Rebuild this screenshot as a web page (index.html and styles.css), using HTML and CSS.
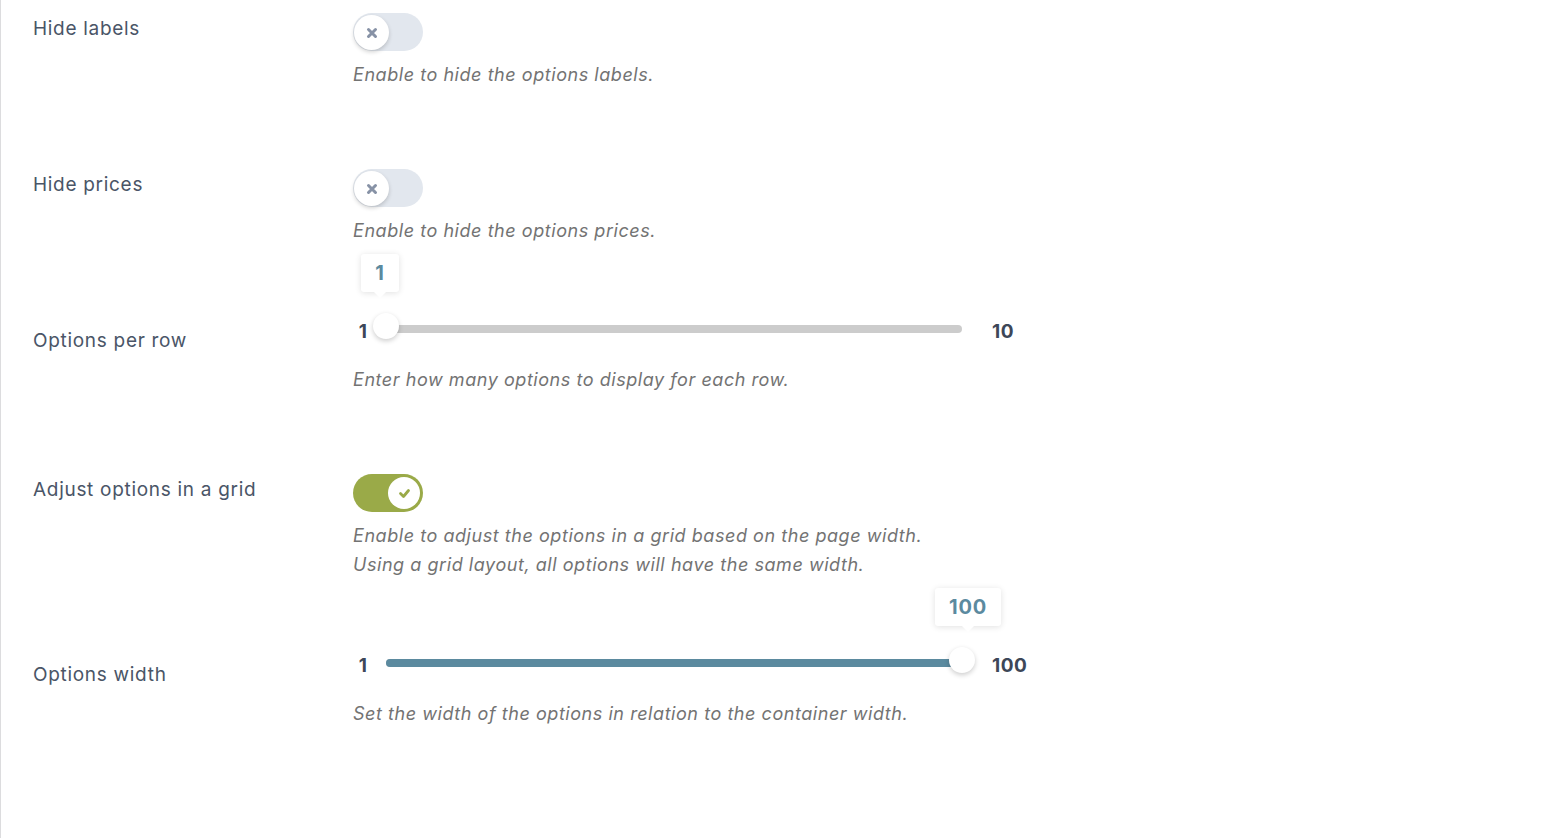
FILE: index.html
```html
<!DOCTYPE html>
<html lang="en">
<head>
    <meta charset="UTF-8">
    <meta name="viewport" content="width=device-width, initial-scale=1.0">
    <title>Option display settings</title>
    <link rel="stylesheet" href="styles.css">
</head>
<body>
    <div class="settings">

        <!-- Hide labels -->
        <div class="row">
            <div class="label">Hide labels</div>
            <div class="field">
                <span class="toggle">
                    <span class="knob">
                        <svg width="12" height="12" viewBox="0 0 12 12"><path d="M2.5 2.5l7 7M9.5 2.5l-7 7" stroke="#8792a6" stroke-width="3" stroke-linecap="round"/></svg>
                    </span>
                </span>
                <p class="desc">Enable to hide the options labels.</p>
            </div>
        </div>

        <!-- Hide prices -->
        <div class="row">
            <div class="label">Hide prices</div>
            <div class="field">
                <span class="toggle">
                    <span class="knob">
                        <svg width="12" height="12" viewBox="0 0 12 12"><path d="M2.5 2.5l7 7M9.5 2.5l-7 7" stroke="#8792a6" stroke-width="3" stroke-linecap="round"/></svg>
                    </span>
                </span>
                <p class="desc">Enable to hide the options prices.</p>
            </div>
        </div>

        <!-- Options per row -->
        <div class="row">
            <div class="label">Options per row</div>
            <div class="field">
                <div class="slider">
                    <span class="min">1</span>
                    <div class="track">
                        <span class="fill" style="width: 0%"></span>
                        <span class="thumb" style="left: 0%">
                            <span class="tip tip-start">1</span>
                        </span>
                    </div>
                    <span class="max">10</span>
                </div>
                <p class="desc">Enter how many options to display for each row.</p>
            </div>
        </div>

        <!-- Adjust options in a grid -->
        <div class="row">
            <div class="label">Adjust options in a grid</div>
            <div class="field">
                <span class="toggle on">
                    <span class="knob">
                        <svg width="13" height="11" viewBox="0 0 13 11"><path d="M2.5 5.5l3 3 5-6" fill="none" stroke="#9aaa48" stroke-width="2.8" stroke-linecap="round" stroke-linejoin="round"/></svg>
                    </span>
                </span>
                <p class="desc">Enable to adjust the options in a grid based on the page width.<br>Using a grid layout, all options will have the same width.</p>
            </div>
        </div>

        <!-- Options width -->
        <div class="row">
            <div class="label">Options width</div>
            <div class="field">
                <div class="slider">
                    <span class="min">1</span>
                    <div class="track">
                        <span class="fill" style="width: 100%"></span>
                        <span class="thumb" style="left: 100%">
                            <span class="tip tip-end">100</span>
                        </span>
                    </div>
                    <span class="max">100</span>
                </div>
                <p class="desc">Set the width of the options in relation to the container width.</p>
            </div>
        </div>

    </div>
</body>
</html>
```

FILE: styles.css
```css
* {
    box-sizing: border-box;
    margin: 0;
    padding: 0;
}

html, body {
    height: 100%;
}

body {
    font-family: 'Inter', 'Noto Sans', sans-serif;
    background-color: #ffffff;
    border-left: 1px solid #dcdcde;
    color: #4a5567;
}

.settings {
    padding: 13px 0 0 32px;
}

.row {
    display: flex;
    margin-bottom: 80px;
}

.label {
    width: 320px;
    flex-shrink: 0;
    padding-top: 2px;
    font-size: 19px;
    line-height: 28px;
    letter-spacing: 0.7px;
}

.field {
    flex: 1;
}

.desc {
    margin-top: 9px;
    font-size: 18px;
    line-height: 29px;
    letter-spacing: 0.55px;
    font-style: italic;
    color: #737373;
}

.slider + .desc {
    margin-top: 28px;
}

/* toggle switch */
.toggle {
    display: block;
    position: relative;
    width: 70px;
    height: 38px;
    border-radius: 19px;
    background-color: #e2e7ee;
}

.toggle .knob {
    position: absolute;
    top: 2px;
    left: 1px;
    width: 35px;
    height: 35px;
    border-radius: 50%;
    background-color: #ffffff;
    box-shadow: 0 2px 4px rgba(0, 0, 0, 0.18);
    display: flex;
    align-items: center;
    justify-content: center;
}

.toggle.on {
    background-color: #9aaa48;
}

.toggle.on .knob {
    top: 3px;
    left: auto;
    right: 3px;
    width: 32px;
    height: 32px;
    box-shadow: none;
}

/* range slider */
.slider {
    display: flex;
    align-items: center;
    height: 12px;
    font-size: 19px;
    font-weight: 700;
    letter-spacing: 0.5px;
    color: #3d4758;
}

.slider .min {
    width: 20px;
    text-align: center;
}

.track {
    position: relative;
    width: 576px;
    height: 8px;
    margin: 0 30px 4px 13px;
    border-radius: 4px;
    background-color: #cccccc;
}

.track .fill {
    display: block;
    height: 100%;
    border-radius: 4px;
    background-color: #5b8a9f;
}

.thumb {
    position: absolute;
    top: 50%;
    width: 26px;
    height: 26px;
    margin-top: -16px;
    transform: translateX(-50%);
    border-radius: 50%;
    background-color: #ffffff;
    box-shadow: 0 2px 5px rgba(0, 0, 0, 0.2);
}

.tip {
    position: absolute;
    bottom: 47px;
    left: 50%;
    min-width: 38px;
    height: 38px;
    padding: 0 14px;
    transform: translateX(-50%);
    border-radius: 3px;
    background-color: #ffffff;
    box-shadow: 0 1px 6px rgba(0, 0, 0, 0.12);
    font-size: 20px;
    line-height: 38px;
    letter-spacing: 0.8px;
    text-align: center;
    color: #5b8a9f;
}

.tip::after {
    content: "";
    position: absolute;
    left: 50%;
    bottom: -6px;
    margin-left: -6px;
    border-left: 6px solid transparent;
    border-right: 6px solid transparent;
    border-top: 6px solid #ffffff;
}

.tip-start {
    margin-left: -6px;
}

.tip-end {
    margin-left: 6px;
}
```
